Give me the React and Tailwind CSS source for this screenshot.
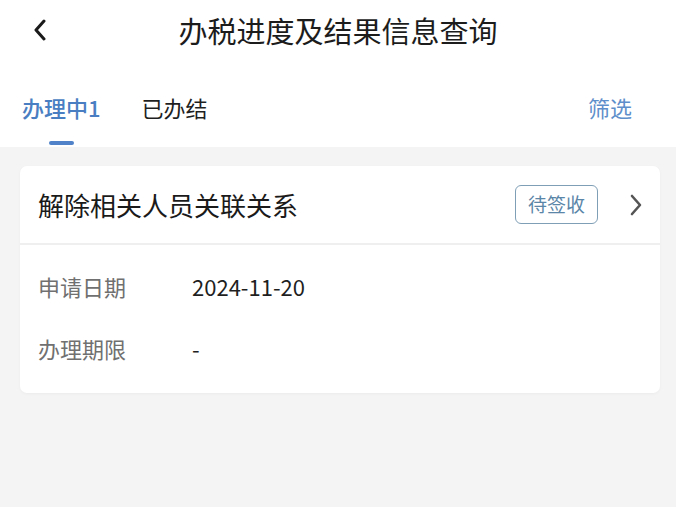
import React, { useState } from 'react';

const font = { fontFamily: '"Noto Sans CJK SC", "Noto Sans", sans-serif' };

const App = () => {
  const [tab, setTab] = useState(0);

  const rows = [
    { label: '申请日期', value: '2024-11-20' },
    { label: '办理期限', value: '-' },
  ];

  return (
    <div className="w-[676px] h-[507px] bg-[#f4f4f4] flex flex-col" style={font}>
      {/* header */}
      <div className="bg-white">
        <div className="relative h-[60px] flex items-center justify-center">
          <button className="absolute left-[30px] top-[19px] w-[20px] h-[22px] flex items-center justify-center">
            <svg width="14" height="22" viewBox="0 0 14 22" fill="none">
              <polyline points="11,2 3,11 11,20" stroke="#1a1a1a" strokeWidth="3" strokeLinecap="round" strokeLinejoin="round" />
            </svg>
          </button>
          <h1 className="text-[29px] leading-none text-[#1c1c1c]">办税进度及结果信息查询</h1>
        </div>

        {/* tabs */}
        <div className="h-[87px] flex items-start pl-[22px] pr-[44px]">
          <div className="flex gap-[41px] pt-[33px]">
            {['办理中1', '已办结'].map((t, i) => (
              <button key={t} onClick={() => setTab(i)} className="flex flex-col items-center">
                <span
                  className={
                    'text-[22px] leading-[28px] ' +
                    (tab === i ? 'text-[#4a7ec2] font-medium' : 'text-[#1f1f1f]')
                  }
                >
                  {t}
                </span>
                <span
                  className={
                    'mt-[20px] w-[25px] h-[4px] rounded-full ' + (tab === i ? 'bg-[#4f82c9]' : 'bg-transparent')
                  }
                />
              </button>
            ))}
          </div>
          <button className="ml-auto pt-[33px] text-[22px] leading-[28px] text-[#5f8fcb]">筛选</button>
        </div>
      </div>

      {/* list */}
      <div className="pt-[19px] pl-[20px] pr-[16px]">
        <div className="bg-white rounded-[7px] shadow-[0_1px_3px_rgba(0,0,0,0.04)]">
          <div className="h-[79px] flex items-center pl-[18px] pr-[17px] border-b-2 border-[#efefef]">
            <span className="text-[26px] leading-none text-[#1a1a1a]">解除相关人员关联关系</span>
            <span className="ml-auto w-[83px] h-[39px] flex items-center justify-center border border-[#7f9fb6] rounded-[6px] text-[19px] text-[#5b86a8]">
              待签收
            </span>
            <svg className="ml-[31px]" width="14" height="22" viewBox="0 0 14 22" fill="none">
              <polyline points="3,2 11,11 3,20" stroke="#555" strokeWidth="2.6" strokeLinecap="round" strokeLinejoin="round" />
            </svg>
          </div>
          <div className="pt-[10px] pb-[14px] pl-[18px]">
            {rows.map((r) => (
              <div key={r.label} className="h-[62px] flex items-center">
                <span className="w-[154px] text-[22px] text-[#707070]">{r.label}</span>
                <span className="text-[22px] text-[#1f1f1f]">{r.value}</span>
              </div>
            ))}
          </div>
        </div>
      </div>
    </div>
  );
};

export default App;
